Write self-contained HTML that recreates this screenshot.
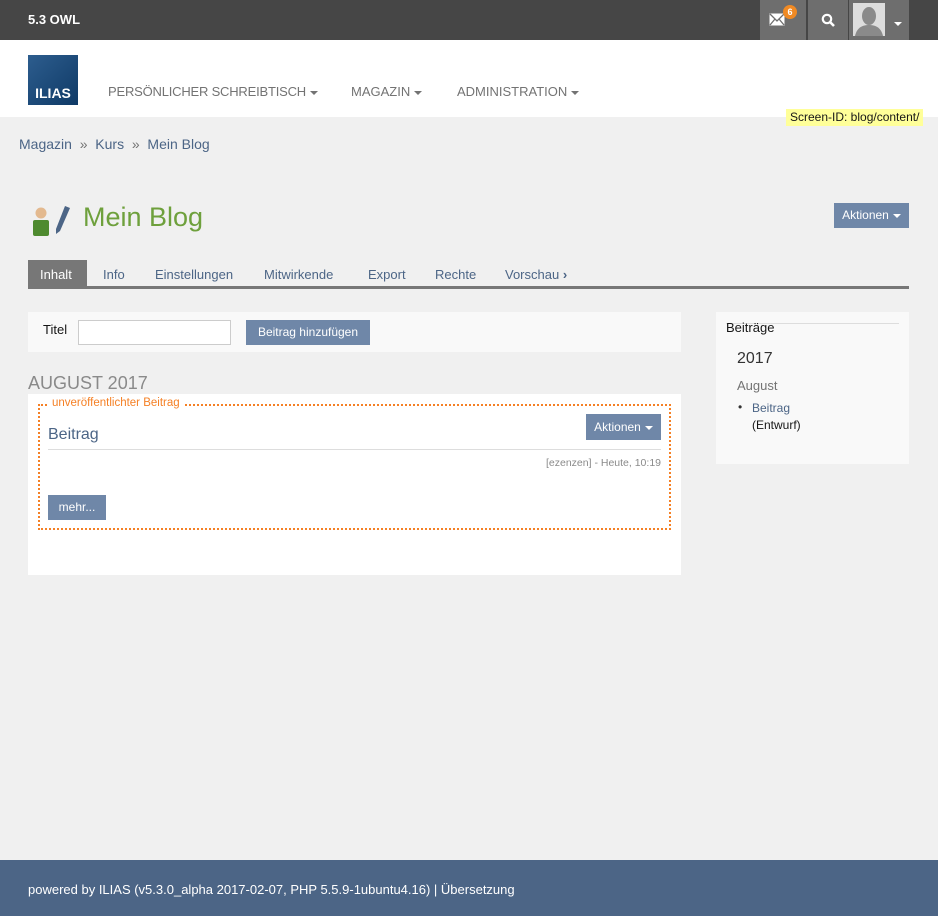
<!DOCTYPE html>
<html><head><meta charset="utf-8"><style>
*{box-sizing:border-box;margin:0;padding:0}
body{width:938px;height:916px;background:#f0f0f0;font-family:"Liberation Sans",sans-serif;position:relative;overflow:hidden;color:#161616}
.abs{position:absolute}
#top{left:0;top:0;width:938px;height:40px;background:#464646}
#main{left:0;top:40px;width:938px;height:77px;background:#fff}
.nav{font-size:13px;color:#737373;top:84px}
.caret{display:inline-block;width:0;height:0;border-left:4px solid transparent;border-right:4px solid transparent;border-top:4px solid currentColor;vertical-align:middle;margin-left:4px}
.btn{background:#6f87a8;color:#fff;font-size:12px;text-align:center}
#foot{left:0;top:860px;width:938px;height:56px;background:#4c6586;color:#fff;font-size:13px}
</style></head><body>
<div id="top" class="abs"></div>
<div class="abs" style="left:28px;top:12px;color:#fff;font-weight:bold;font-size:13px">5.3 OWL</div>
<div class="abs" style="left:760px;top:0;width:46px;height:40px;background:#6e6e6e"></div>
<svg class="abs" style="left:769px;top:13px" width="16" height="13" viewBox="0 0 16 13"><rect x="0.5" y="0.5" width="15" height="12" fill="#fff"/><path d="M1 1 L8 8 L15 1 M1 12 L6 6 M15 12 L10 6" stroke="#6e6e6e" stroke-width="1.3" fill="none"/></svg>
<div class="abs" style="left:783px;top:5px;width:14px;height:14px;border-radius:7px;background:#f08a24;color:#fff;font-size:9px;font-weight:bold;text-align:center;line-height:14px">6</div>
<div class="abs" style="left:808px;top:0;width:40px;height:40px;background:#6e6e6e"></div>
<svg class="abs" style="left:821px;top:13px" width="14" height="14" viewBox="0 0 14 14"><circle cx="6" cy="6" r="4.2" stroke="#fff" stroke-width="2.2" fill="none"/><path d="M9 9 L13 13" stroke="#fff" stroke-width="2.6"/></svg>
<div class="abs" style="left:849px;top:0;width:60px;height:40px;background:#6e6e6e"></div>
<div class="abs" style="left:853px;top:3px;width:32px;height:33px;background:#ddd"></div>
<svg class="abs" style="left:853px;top:3px" width="32" height="33" viewBox="0 0 32 33"><ellipse cx="16" cy="13" rx="7" ry="9" fill="#8a8a8a"/><path d="M2 33 C4 24 10 22 16 22 C22 22 28 24 30 33Z" fill="#8a8a8a"/></svg>
<div class="abs" style="left:890px;top:15px;color:#fff"><span class="caret"></span></div>
<div id="main" class="abs"></div>
<div class="abs" style="left:28px;top:55px;width:50px;height:50px;background:linear-gradient(135deg,#2d5d8e,#0f3a66);color:#fff;font-weight:bold;font-size:14px;text-align:center;padding-top:30px">ILIAS</div>
<div class="abs nav" style="left:108px;letter-spacing:-0.2px">PERSÖNLICHER SCHREIBTISCH<span class="caret"></span></div>
<div class="abs nav" style="left:351px">MAGAZIN<span class="caret"></span></div>
<div class="abs nav" style="left:457px">ADMINISTRATION<span class="caret"></span></div>
<div class="abs" style="left:786px;top:109px;background:#ffff99;font-size:12px;padding:1px 4px;height:17px">Screen-ID: blog/content/</div>
<div class="abs" style="left:19px;top:136px;font-size:14px;color:#4c6586">Magazin &nbsp;<span style="color:#737373">»</span>&nbsp; Kurs &nbsp;<span style="color:#737373">»</span>&nbsp; Mein Blog</div>
<svg class="abs" style="left:32px;top:205px" width="40" height="32" viewBox="0 0 40 32"><circle cx="9" cy="8" r="5.5" fill="#e3b98f"/><rect x="1" y="15" width="16" height="16" rx="2" fill="#4e8a2f"/><path d="M33 1 L38 3 L28 26 L24 29 L24 24Z" fill="#4c6586"/></svg>
<div class="abs" style="left:83px;top:202px;font-size:27px;color:#6ea03c">Mein Blog</div>
<div class="abs btn" style="left:834px;top:203px;width:75px;height:25px;line-height:25px">Aktionen<span class="caret"></span></div>
<div class="abs" style="left:28px;top:286px;width:881px;height:3px;background:#777"></div>
<div class="abs" style="left:28px;top:260px;width:59px;height:27px;background:#777"></div>
<div class="abs" style="top:267px;font-size:13px;left:40px;color:#fff">Inhalt</div>
<div class="abs" style="top:267px;font-size:13px;left:103px;color:#4c6586">Info</div>
<div class="abs" style="top:267px;font-size:13px;left:155px;color:#4c6586">Einstellungen</div>
<div class="abs" style="top:267px;font-size:13px;left:264px;color:#4c6586">Mitwirkende</div>
<div class="abs" style="top:267px;font-size:13px;left:368px;color:#4c6586">Export</div>
<div class="abs" style="top:267px;font-size:13px;left:435px;color:#4c6586">Rechte</div>
<div class="abs" style="top:267px;font-size:13px;left:505px;color:#4c6586">Vorschau <b style="color:#4c6586">›</b></div>
<div class="abs" style="left:28px;top:312px;width:653px;height:40px;background:#f9f9f9"></div>
<div class="abs" style="left:43px;top:322px;font-size:13px">Titel</div>
<div class="abs" style="left:78px;top:320px;width:153px;height:25px;background:#fff;border:1px solid #ccc"></div>
<div class="abs btn" style="left:246px;top:320px;width:124px;height:25px;line-height:25px">Beitrag hinzufügen</div>
<div class="abs" style="left:28px;top:373px;font-size:18px;color:#8a8a8a">AUGUST 2017</div>
<div class="abs" style="left:28px;top:394px;width:653px;height:181px;background:#fff"></div>
<div class="abs" style="left:38px;top:404px;width:633px;height:126px;border:2px dotted #f58025"></div>
<div class="abs" style="left:48px;top:397px;background:#fff;color:#f58025;font-size:11.5px;padding:0 4px">unveröffentlichter Beitrag</div>
<div class="abs" style="left:48px;top:426px;font-size:16px;color:#4c6586">Beitrag</div>
<div class="abs btn" style="left:586px;top:414px;width:75px;height:26px;line-height:26px">Aktionen<span class="caret"></span></div>
<div class="abs" style="left:48px;top:449px;width:613px;height:1px;background:#ddd"></div>
<div class="abs" style="left:400px;width:261px;text-align:right;top:457px;font-size:10.5px;color:#8a8a8a">[ezenzen] - Heute, 10:19</div>
<div class="abs btn" style="left:48px;top:495px;width:58px;height:25px;line-height:25px">mehr...</div>
<div class="abs" style="left:716px;top:312px;width:193px;height:152px;background:#f9f9f9"></div>
<div class="abs" style="left:726px;top:323px;width:173px;height:1px;background:#ddd"></div>
<div class="abs" style="left:726px;top:320px;font-size:13px;color:#161616">Beiträge</div>
<div class="abs" style="left:737px;top:350px;font-size:16px;color:#333">2017</div>
<div class="abs" style="left:737px;top:378px;font-size:13px;color:#737373">August</div>
<div class="abs" style="left:738px;top:400px;font-size:12px;color:#333">•</div>
<div class="abs" style="left:752px;top:400px;font-size:12px;line-height:17px"><span style="color:#4c6586">Beitrag</span><br>(Entwurf)</div>
<div id="foot" class="abs"><div style="position:absolute;left:28px;top:22px">powered by ILIAS (v5.3.0_alpha 2017-02-07, PHP 5.5.9-1ubuntu4.16) | Übersetzung</div></div>
</body></html>
